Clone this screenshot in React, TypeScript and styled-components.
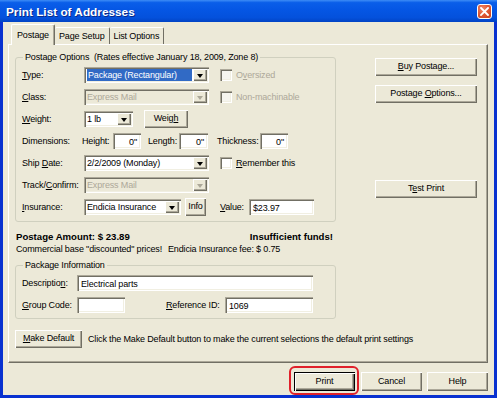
import styled, { createGlobalStyle } from 'styled-components'

const GlobalStyle = createGlobalStyle`
    html, body {
        margin: 0;
        padding: 0;
        background: #ffffff;
    }
    body {
        font-family: "Liberation Sans", Arial, sans-serif;
        font-size: 9px;
        letter-spacing: -0.15px;
        color: #000;
    }
    u {
        text-decoration-thickness: 1px;
        text-underline-offset: 1px;
    }
`

const App = () => {
    return (
        <>
            <GlobalStyle />
            <Window>
                <TitleBar>
                    <Title>Print List of Addresses</Title>
                    <CloseButton>
                        <svg width="9" height="9" viewBox="0 0 9 9">
                            <path d="M1 1 L8 8 M8 1 L1 8" stroke="#fff" strokeWidth="1.8" strokeLinecap="square" />
                        </svg>
                    </CloseButton>
                </TitleBar>
                <Frame>
                    <Client>
                        <TabStrip>
                            <Tab $active>Postage</Tab>
                            <Tab>Page Setup</Tab>
                            <Tab>List Options</Tab>
                        </TabStrip>
                        <Panel>
                            <PanelBody>
                                <LeftCol>
                                    <Group>
                                        <Legend>Postage Options&nbsp; (Rates effective January 18, 2009, Zone 8)</Legend>
                                        <Row>
                                            <Label $w={62}><u>T</u>ype:</Label>
                                            <Combo $w={125}>
                                                <ComboText><Selected>Package (Rectangular)</Selected></ComboText>
                                                <DropButton><Arrow /></DropButton>
                                            </Combo>
                                            <CheckBox $disabled $ml={11} />
                                            <CheckLabel $dim>O<u>v</u>ersized</CheckLabel>
                                        </Row>
                                        <Row>
                                            <Label $w={62}><u>C</u>lass:</Label>
                                            <Combo $w={125} $disabled>
                                                <ComboText>Express Mail</ComboText>
                                                <DropButton><Arrow $dim /></DropButton>
                                            </Combo>
                                            <CheckBox $disabled $ml={11} />
                                            <CheckLabel $dim>Non-machinable</CheckLabel>
                                        </Row>
                                        <Row>
                                            <Label $w={62}><u>W</u>eight:</Label>
                                            <Combo $w={49}>
                                                <ComboText>1 lb</ComboText>
                                                <DropButton><Arrow /></DropButton>
                                            </Combo>
                                            <Button $w={44} $ml={11}>Weig<u>h</u></Button>
                                        </Row>
                                        <Row>
                                            <Label $w={60}>Dimensions:</Label>
                                            <Label $w={31}>Height:</Label>
                                            <TextField $w={28} $right>0"</TextField>
                                            <Label $w={31} $ml={7}>Length:</Label>
                                            <TextField $w={29} $right>0"</TextField>
                                            <Label $w={43} $ml={9}>Thickness:</Label>
                                            <TextField $w={28} $right>0"</TextField>
                                        </Row>
                                        <Row>
                                            <Label $w={62}>Ship <u>D</u>ate:</Label>
                                            <Combo $w={125}>
                                                <ComboText>2/2/2009 (Monday)</ComboText>
                                                <DropButton><Arrow /></DropButton>
                                            </Combo>
                                            <CheckBox $ml={11} />
                                            <CheckLabel><u>R</u>emember this</CheckLabel>
                                        </Row>
                                        <Row>
                                            <Label $w={62}>Track/<u>C</u>onfirm:</Label>
                                            <Combo $w={125} $disabled>
                                                <ComboText>Express Mail</ComboText>
                                                <DropButton><Arrow $dim /></DropButton>
                                            </Combo>
                                        </Row>
                                        <Row>
                                            <Label $w={62}><u>I</u>nsurance:</Label>
                                            <Combo $w={97}>
                                                <ComboText>Endicia Insurance</ComboText>
                                                <DropButton><Arrow /></DropButton>
                                            </Combo>
                                            <Button $w={21} $ml={4} $pad={0}>Info</Button>
                                            <Label $w={29} $ml={14}><u>V</u>alue:</Label>
                                            <TextField $w={65}>$23.97</TextField>
                                        </Row>
                                    </Group>
                                    <AmountRow>
                                        <Bold>Postage Amount: $ 23.89</Bold>
                                        <Bold>Insufficient funds!</Bold>
                                    </AmountRow>
                                    <InfoLine>
                                        <Label $w={152}>Commercial base "discounted" prices!</Label>
                                        <span>Endicia Insurance fee: $ 0.75</span>
                                    </InfoLine>
                                    <Group $package>
                                        <Legend>Package Information</Legend>
                                        <Row>
                                            <Label $w={55}>Descriptio<u>n</u>:</Label>
                                            <TextField $w={236}>Electrical parts</TextField>
                                        </Row>
                                        <Row>
                                            <Label $w={55}><u>G</u>roup Code:</Label>
                                            <TextField $w={48} />
                                            <Label $w={59} $ml={41}><u>R</u>eference ID:</Label>
                                            <TextField $w={88}>1069</TextField>
                                        </Row>
                                    </Group>
                                </LeftCol>
                                <RightCol>
                                    <Button $w={102}><u>B</u>uy Postage...</Button>
                                    <Button $w={102} $mt={9}>Postage <u>O</u>ptions...</Button>
                                    <Button $w={102} $mt={77}>T<u>e</u>st Print</Button>
                                </RightCol>
                            </PanelBody>
                            <DefaultRow>
                                <Button $w={67}><u>M</u>ake Default</Button>
                                <Hint>Click the Make Default button to make the current selections the default print settings</Hint>
                            </DefaultRow>
                        </Panel>
                        <Footer>
                            <Highlighted>
                                <Button $w={61} $h={19} $default>Print</Button>
                                <RedRing />
                            </Highlighted>
                            <Button $w={61} $h={19}>Cancel</Button>
                            <Button $w={61} $h={19}>Help</Button>
                        </Footer>
                    </Client>
                </Frame>
            </Window>
        </>
    )
}

export default App

const Window = styled.div`
    width: 497px;
    height: 398px;
    display: flex;
    flex-direction: column;
    background: #0a45d8;
    overflow: hidden;
`

const TitleBar = styled.div`
    height: 22px;
    flex: none;
    display: flex;
    align-items: center;
    justify-content: space-between;
    padding: 0 5px 0 6px;
    box-sizing: border-box;
    background: linear-gradient(
        to bottom,
        #3d8cf6 0%,
        #0a5ee9 12%,
        #0556e4 45%,
        #0451dc 80%,
        #0143c4 100%
    );
`

const Title = styled.span`
    color: #fff;
    font-weight: 700;
    font-size: 11.8px;
    letter-spacing: 0;
    text-shadow: 1px 1px 0 #0a2a88;
    margin-top: 1px;
`

const CloseButton = styled.div`
    width: 15px;
    height: 15px;
    box-sizing: border-box;
    border: 1px solid #fff;
    border-radius: 3px;
    background: radial-gradient(circle at 35% 30%, #f08a6a 0%, #e05a36 45%, #c8401c 100%);
    display: flex;
    align-items: center;
    justify-content: center;
`

const Frame = styled.div`
    flex: 1;
    display: flex;
    padding: 0 3px 3px 3px;
    background: #0831d0;
`

const Client = styled.div`
    flex: 1;
    display: flex;
    flex-direction: column;
    background: #ece9d8;
    padding: 2px 6px 0 5px;
`

const TabStrip = styled.div`
    display: flex;
    align-items: flex-end;
    height: 20px;
    padding-left: 3px;
    position: relative;
    z-index: 2;
`

const Tab = styled.div<{ $active?: boolean }>`
    height: ${(p) => (p.$active ? 21 : 17)}px;
    margin-bottom: ${(p) => (p.$active ? -1 : 0)}px;
    padding: ${(p) => (p.$active ? '0 5px' : '0 4px')};
    display: flex;
    align-items: center;
    box-sizing: border-box;
    background: #ece9d8;
    border-top: 1px solid #fff;
    border-left: ${(p) => (p.$active ? '1px solid #fff' : 'none')};
    border-right: 1px solid #716f64;
    box-shadow: ${(p) => (p.$active ? 'inset -1px 0 #aca899' : 'none')};
    border-radius: 2px 2px 0 0;
`

const Panel = styled.div`
    flex: 1;
    display: flex;
    flex-direction: column;
    border-top: 1px solid #fff;
    border-left: 1px solid #fff;
    border-right: 1px solid #716f64;
    border-bottom: 1px solid #716f64;
    box-shadow: inset -1px -1px #aca899;
    padding: 7px 0 0 6px;
`

const PanelBody = styled.div`
    display: flex;
`

const LeftCol = styled.div`
    width: 321px;
    display: flex;
    flex-direction: column;
`

const RightCol = styled.div`
    margin-left: auto;
    margin-right: 10px;
    padding-top: 6px;
    display: flex;
    flex-direction: column;
`

const Group = styled.fieldset<{ $package?: boolean }>`
    margin: ${(p) => (p.$package ? '5px 0 0 0' : '0')};
    padding: ${(p) => (p.$package ? '1px 6px 2px 6px' : '1px 6px 3px 6px')};
    border: 1px solid #d0d0bf;
    border-radius: 3px;
    min-width: 0;
`

const Legend = styled.legend`
    padding: 0 2px;
    margin-left: 1px;
    line-height: 11px;
`

const Row = styled.div`
    display: flex;
    align-items: center;
    height: 22px;
`

const Label = styled.span<{ $w?: number; $ml?: number; $dim?: boolean }>`
    flex: none;
    width: ${(p) => (p.$w ? `${p.$w}px` : 'auto')};
    margin-left: ${(p) => p.$ml ?? 0}px;
    color: ${(p) => (p.$dim ? '#aca899' : '#000')};
    white-space: nowrap;
`

const Sunken = styled.div<{ $w: number }>`
    flex: none;
    width: ${(p) => p.$w}px;
    height: 16px;
    box-sizing: border-box;
    box-shadow: inset 1px 1px #aca899, inset 2px 2px #716f64, inset -1px -1px #fff, inset -2px -2px #f1efe2;
`

const TextField = styled(Sunken)<{ $right?: boolean }>`
    background: #fff;
    display: flex;
    align-items: center;
    justify-content: ${(p) => (p.$right ? 'flex-end' : 'flex-start')};
    padding: 2px 4px 1px 4px;
    white-space: nowrap;
    overflow: hidden;
`

const Combo = styled(Sunken)<{ $disabled?: boolean }>`
    display: flex;
    padding: 2px;
    background: ${(p) => (p.$disabled ? '#ece9d8' : '#fff')};
    color: ${(p) => (p.$disabled ? '#aca899' : '#000')};
`

const ComboText = styled.div`
    flex: 1;
    display: flex;
    align-items: center;
    padding-left: 1px;
    white-space: nowrap;
    overflow: hidden;
`

const Selected = styled.span`
    flex: 1;
    align-self: stretch;
    display: flex;
    align-items: center;
    padding-left: 1px;
    margin-right: 1px;
    background: #316ac5;
    color: #fff;
`

const DropButton = styled.div`
    width: 14px;
    flex: none;
    display: flex;
    align-items: center;
    justify-content: center;
    background: #ece9d8;
    box-shadow: inset 1px 1px #fff, inset -1px -1px #716f64, inset -2px -2px #aca899;
`

const Arrow = styled.div<{ $dim?: boolean }>`
    width: 0;
    height: 0;
    border-left: 3.5px solid transparent;
    border-right: 3.5px solid transparent;
    border-top: 4px solid ${(p) => (p.$dim ? '#aca899' : '#000')};
    margin-top: 1px;
`

const CheckBox = styled.div<{ $ml?: number; $disabled?: boolean }>`
    flex: none;
    width: 12px;
    height: 12px;
    margin-left: ${(p) => p.$ml ?? 0}px;
    box-sizing: border-box;
    background: ${(p) => (p.$disabled ? '#f5f4ee' : '#fff')};
    box-shadow: inset 1px 1px #aca899, inset 2px 2px #716f64, inset -1px -1px #fff, inset -2px -2px #f1efe2;
`

const CheckLabel = styled.span<{ $dim?: boolean }>`
    margin-left: 4px;
    color: ${(p) => (p.$dim ? '#aca899' : '#000')};
    white-space: nowrap;
`

const Button = styled.div<{ $w?: number; $h?: number; $ml?: number; $mt?: number; $pad?: number; $default?: boolean }>`
    flex: none;
    width: ${(p) => (p.$w ? `${p.$w}px` : 'auto')};
    height: ${(p) => p.$h ?? 18}px;
    line-height: ${(p) => (p.$h ?? 18) - 1}px;
    margin-left: ${(p) => p.$ml ?? 0}px;
    margin-top: ${(p) => p.$mt ?? 0}px;
    padding: 0 ${(p) => p.$pad ?? 4}px;
    box-sizing: border-box;
    display: block;
    text-align: center;
    white-space: nowrap;
    background: #ece9d8;
    box-shadow: ${(p) =>
        p.$default
            ? 'inset 1px 1px #000, inset 2px 2px #fff, inset -1px -1px #000, inset -2px -2px #716f64, inset -3px -3px #aca899'
            : 'inset 1px 1px #fff, inset -1px -1px #716f64, inset -2px -2px #aca899'};
`

const AmountRow = styled.div`
    display: flex;
    justify-content: space-between;
    padding: 0 3px 0 1px;
    margin-top: 9px;
    line-height: 12px;
`

const Bold = styled.span`
    font-weight: 700;
    font-size: 9.6px;
    letter-spacing: 0;
`

const InfoLine = styled.div`
    display: flex;
    padding-left: 1px;
    line-height: 12px;
`

const DefaultRow = styled.div`
    display: flex;
    align-items: center;
    margin-top: 11px;
`

const Hint = styled.span`
    margin-left: 6px;
    white-space: nowrap;
`

const Footer = styled.div`
    display: flex;
    justify-content: flex-end;
    gap: 5px;
    padding: 9px 0 4px 0;
`

const Highlighted = styled.div`
    position: relative;
    margin-right: 1px;
`

const RedRing = styled.div`
    position: absolute;
    inset: -6px -4px -4px -5px;
    border: 2.5px solid #e0202a;
    border-radius: 6px;
    pointer-events: none;
`
